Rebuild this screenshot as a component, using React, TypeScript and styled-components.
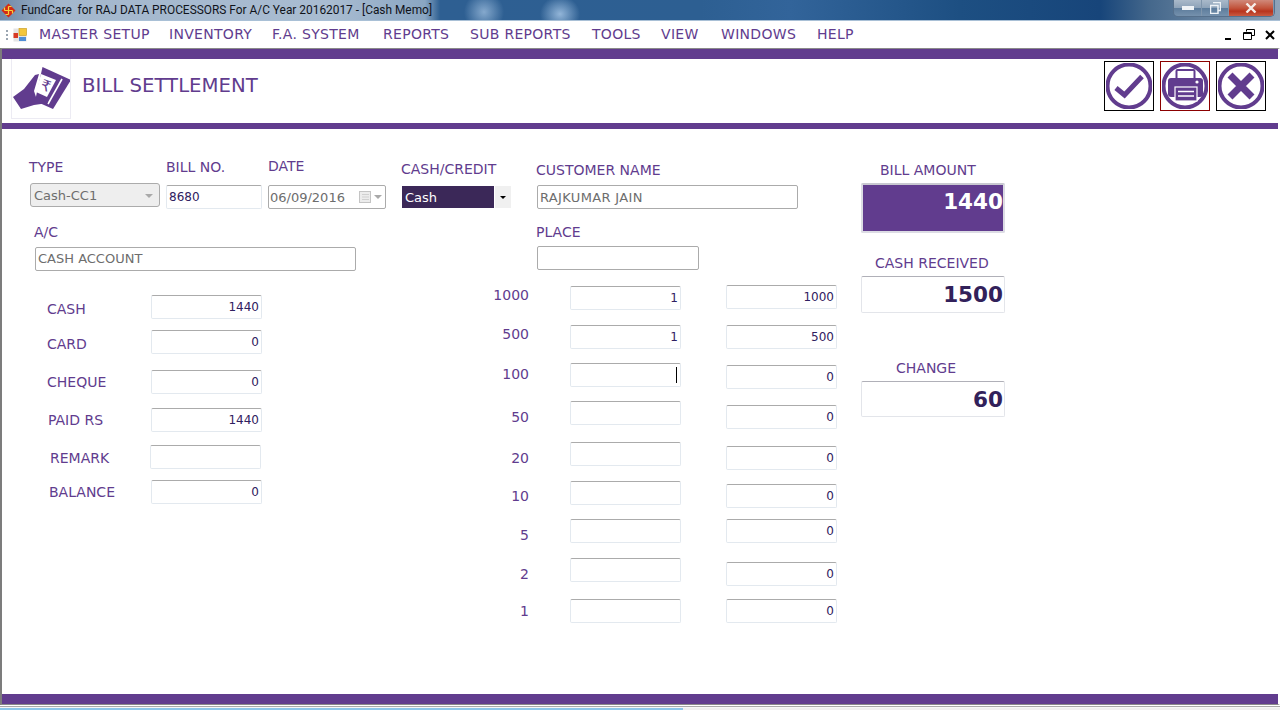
import React from 'react'
import styled, { createGlobalStyle } from 'styled-components'

const PURPLE = '#613c8e'
const INK = '#2f2060'

const GlobalStyle = createGlobalStyle`
  html, body {
    margin: 0;
    padding: 0;
    background: #fff;
    overflow: hidden;
  }
  * {
    box-sizing: border-box;
  }
`

const Window = styled.div`
  width: 1280px;
  height: 710px;
  display: flex;
  flex-direction: column;
  overflow: hidden;
  font-family: 'DejaVu Sans', Verdana, sans-serif;
  background: #fff;
`

const TitleBar = styled.div`
  height: 21px;
  display: flex;
  align-items: flex-start;
  border-bottom: 1px solid #a9c0d6;
  background:
    radial-gradient(ellipse 20px 20px at 484px 12px, rgba(170, 200, 230, 0.7), transparent),
    radial-gradient(ellipse 20px 18px at 560px 14px, rgba(180, 210, 240, 0.75), transparent),
    linear-gradient(90deg, #6f89a8 0, #a3b7cd 60px, #a9bcd1 330px, #8aa6c2 425px, #2e5f92 440px, #2d5f92 700px, #32649a 790px, #1d4f82 960px, #17457a 1100px, #45688c 1150px, #8fa3b8 1280px);
`

const TitleIcon = styled.svg`
  width: 15px;
  height: 15px;
  margin: 3px 0 0 1px;
  flex-shrink: 0;
`

const TitleText = styled.div`
  margin: 2px 0 0 5px;
  font: 11.9px/16px Roboto, 'Open Sans', sans-serif;
  color: #10131a;
  white-space: pre;
  flex: 1;
`

const WindowControls = styled.div`
  display: flex;
  width: 102px;
  height: 17px;
  margin-right: 5px;
  border: 1px solid #56708c;
  border-top: 0;
  border-radius: 0 0 5px 5px;
  overflow: hidden;
`

const ControlButton = styled.div<{ $w: number; $danger?: boolean }>`
  width: ${({ $w }) => $w}px;
  display: flex;
  align-items: center;
  justify-content: center;
  border-right: 1px solid #7f95ac;
  background: ${({ $danger }) =>
    $danger
      ? 'linear-gradient(180deg, #d0897a 0, #c2543c 50%, #b8341e 70%, #c95a42 100%)'
      : 'linear-gradient(180deg, #a9b9ca 0, #8ea3b9 48%, #5d7c9c 52%, #7591ad 100%)'};
`

const MenuBar = styled.div`
  height: 27px;
  display: flex;
  align-items: center;
  background: #fff;
`

const Grip = styled.div`
  width: 2px;
  height: 10px;
  margin: 0 5px 0 6px;
  background: repeating-linear-gradient(180deg, #9aa5b1 0 2px, transparent 2px 4px);
`

const MenuIcon = styled.svg`
  width: 14px;
  height: 14px;
  margin-right: 12px;
`

const MenuItem = styled.div<{ $w: number }>`
  width: ${({ $w }) => $w}px;
  font-size: 14px;
  line-height: 27px;
  color: ${PURPLE};
  letter-spacing: 0.3px;
  white-space: nowrap;
`

const MdiControls = styled.div`
  margin-left: auto;
  display: flex;
  align-items: center;
  gap: 9px;
  margin-right: 4px;
`

const Frame = styled.div`
  height: 657px;
  display: flex;
  flex-direction: column;
  border-top: 1px solid #8a8a8a;
  border-left: 2px solid #7c7c7c;
  border-bottom: 1px solid #8a8a8a;
  border-right: 2px solid #fff;
`

const Band = styled.div<{ $h: number }>`
  height: ${({ $h }) => $h}px;
  background: ${PURPLE};
  flex-shrink: 0;
`

const HeaderRow = styled.div`
  height: 64px;
  display: flex;
  align-items: flex-start;
`

const LogoBox = styled.div`
  width: 60px;
  height: 60px;
  margin-left: 9px;
  border: 1px solid #ecebf3;
  border-top: 0;
`

const PageTitle = styled.div`
  margin: 16px 0 0 11px;
  font-size: 19.7px;
  line-height: 22px;
  color: ${PURPLE};
  flex: 1;
`

const ActionGroup = styled.div`
  display: flex;
  gap: 6px;
  margin: 2px 12px 0 0;
`

const ActionButton = styled.div<{ $active?: boolean }>`
  width: 50px;
  height: 50px;
  border: 1.5px solid ${({ $active }) => ($active ? '#8b0000' : '#000')};
  display: flex;
  align-items: center;
  justify-content: center;
  background: #fff;
`

const Body = styled.div`
  flex: 1;
  display: flex;
  padding-left: 27px;
`

const LeftColumn = styled.div`
  width: 372px;
  padding-top: 29px;
`

const MiddleColumn = styled.div`
  width: 460px;
  padding-top: 31px;
`

const RightColumn = styled.div`
  width: 144px;
  padding-top: 32px;
`

const Row = styled.div`
  display: flex;
  align-items: flex-start;
`

const Field = styled.div<{ $w?: number; $mt?: number; $ml?: number }>`
  display: flex;
  flex-direction: column;
  align-items: flex-start;
  ${({ $w }) => ($w ? `width: ${$w}px;` : '')}
  margin-top: ${({ $mt = 0 }) => $mt}px;
  margin-left: ${({ $ml = 0 }) => $ml}px;
`

const Label = styled.div<{ $mb?: number }>`
  height: 18px;
  font-size: 14px;
  line-height: 19px;
  color: ${PURPLE};
  white-space: nowrap;
  margin-bottom: ${({ $mb = 0 }) => $mb}px;
`

const TextBox = styled.div<{ $w: number; $ml?: number; $outlined?: boolean; $right?: boolean }>`
  width: ${({ $w }) => $w}px;
  height: 24px;
  flex-shrink: 0;
  margin-left: ${({ $ml = 0 }) => $ml}px;
  padding: 0 2px;
  display: flex;
  align-items: center;
  justify-content: ${({ $right }) => ($right ? 'flex-end' : 'flex-start')};
  border: 1px solid ${({ $outlined }) => ($outlined ? '#ababab' : '#e3e9ef')};
  border-top-color: #ababab;
  border-radius: 2px;
  background: #fff;
  font-size: ${({ $outlined }) => ($outlined ? 13 : 12)}px;
  color: ${({ $outlined }) => ($outlined ? '#6d6d6d' : INK)};
  white-space: nowrap;
`

const CustomerBox = styled(TextBox)`
  letter-spacing: 0.35px;
`

const AccountBox = styled(TextBox)`
  padding-bottom: 2px;
`

const Caret = styled.span`
  width: 1px;
  height: 16px;
  margin-right: 1px;
  background: #000;
`

const GreySelect = styled.div`
  width: 130px;
  height: 24px;
  margin-left: 1px;
  padding: 1px 6px 0 3px;
  display: flex;
  align-items: center;
  justify-content: space-between;
  border: 1px solid #ababab;
  border-radius: 3px;
  background: #eeeeee;
  font-size: 13px;
  color: #6d6d6d;
`

const DownArrow = styled.span<{ $color?: string; $size?: number }>`
  width: 0;
  height: 0;
  border-left: ${({ $size = 4 }) => $size}px solid transparent;
  border-right: ${({ $size = 4 }) => $size}px solid transparent;
  border-top: ${({ $size = 4 }) => $size}px solid ${({ $color = '#a9a9a9' }) => $color};
`

const DateBox = styled(TextBox)`
  padding: 0 3px 0 1px;
  justify-content: space-between;
`

const CalendarGroup = styled.span`
  display: flex;
  align-items: center;
  gap: 2px;
`

const CalendarIcon = styled.svg`
  width: 13px;
  height: 13px;
`

const DarkSelect = styled.div`
  display: flex;
  gap: 1px;
  height: 22px;
  margin-left: 1px;
`

const DarkSelectValue = styled.div`
  width: 92px;
  padding-left: 3px;
  background: #3b2858;
  color: #fff;
  font-size: 13px;
  line-height: 23px;
`

const DarkSelectButton = styled.div`
  width: 16px;
  background: #f0f0f0;
  display: flex;
  align-items: center;
  justify-content: center;
`

const PayList = styled.div`
  margin-top: 24px;
  width: 233px;
`

const PayRowBox = styled.div<{ $h: number }>`
  height: ${({ $h }) => $h}px;
  display: flex;
  align-items: flex-start;
`

const PayLabel = styled(Label)<{ $left: number; $dy: number }>`
  margin-left: ${({ $left }) => $left}px;
  margin-top: ${({ $dy }) => $dy}px;
`

const PayBox = styled(TextBox)<{ $shift?: number }>`
  margin-left: auto;
  margin-right: ${({ $shift = 0 }) => $shift}px;
`

const DenomList = styled.div`
  margin-top: 15px;
`

const DenomRowBox = styled.div<{ $h: number }>`
  height: ${({ $h }) => $h}px;
  display: flex;
  align-items: flex-start;
`

const DenomLabel = styled(Label)<{ $dy: number }>`
  width: 128px;
  text-align: right;
  margin-top: ${({ $dy }) => $dy}px;
`

const DenomBox = styled(TextBox)<{ $dy: number }>`
  margin-top: ${({ $dy }) => $dy}px;
`

const SummaryLabel = styled(Label)<{ $left: number; $mt?: number }>`
  margin-left: ${({ $left }) => $left}px;
  margin-top: ${({ $mt = 0 }) => $mt}px;
  margin-bottom: 4px;
`

const SummaryBox = styled.div<{ $h: number; $filled?: boolean }>`
  width: 144px;
  height: ${({ $h }) => $h}px;
  padding: ${({ $filled }) => ($filled ? '1px 0 0 0' : '0 1px 0 0')};
  display: flex;
  align-items: ${({ $filled }) => ($filled ? 'flex-start' : 'center')};
  justify-content: flex-end;
  border: ${({ $filled }) => ($filled ? '2px solid #dcdce4' : '1px solid #e3e5ea')};
  border-top-color: ${({ $filled }) => ($filled ? '#c8c8d0' : '#b0b0b8')};
  border-radius: 2px;
  background: ${({ $filled }) => ($filled ? PURPLE : '#fff')};
  color: ${({ $filled }) => ($filled ? '#fff' : '#32215a')};
  font-size: 21.5px;
  font-weight: 700;
  line-height: 31px;
`

const FooterStrip = styled.div`
  height: 5px;
  background: linear-gradient(180deg, #fff 0 1px, #a8a8a8 1px 2px, #f6f6f6 2px 3.4px, transparent 3.4px);
  display: flex;
  align-items: flex-end;
`

const FooterProgress = styled.div`
  width: 683px;
  height: 2px;
  background: #8cc6ea;
`

const FooterRest = styled.div`
  flex: 1;
  height: 2px;
  background: #efefef;
`

const menuItems: [string, number][] = [
  ['MASTER SETUP', 130],
  ['INVENTORY', 103],
  ['F.A. SYSTEM', 111],
  ['REPORTS', 87],
  ['SUB REPORTS', 122],
  ['TOOLS', 69],
  ['VIEW', 60],
  ['WINDOWS', 96],
  ['HELP', 50],
]

const payRows = [
  { label: 'CASH', left: 18, dy: 5, h: 35, value: '1440' },
  { label: 'CARD', left: 18, dy: 5, h: 40, value: '0' },
  { label: 'CHEQUE', left: 18, dy: 3, h: 38, value: '0' },
  { label: 'PAID RS', left: 19, dy: 3, h: 37, value: '1440' },
  { label: 'REMARK', left: 21, dy: 4, h: 35, value: '', shift: 1 },
  { label: 'BALANCE', left: 20, dy: 3, h: 24, value: '0' },
]

const denomRows = [
  { label: '1000', h: 40, ly: 1, ay: 1, by: 0, qty: '1', amount: '1000' },
  { label: '500', h: 38, ly: 0, ay: 0, by: 0, qty: '1', amount: '500' },
  { label: '100', h: 38, ly: 2, ay: 0, by: 2, qty: '', amount: '0', caret: true },
  { label: '50', h: 41, ly: 7, ay: 0, by: 4, qty: '', amount: '0' },
  { label: '20', h: 39, ly: 7, ay: 0, by: 4, qty: '', amount: '0' },
  { label: '10', h: 38, ly: 6, ay: 0, by: 3, qty: '', amount: '0' },
  { label: '5', h: 39, ly: 7, ay: 0, by: 0, qty: '', amount: '0' },
  { label: '2', h: 41, ly: 7, ay: 0, by: 4, qty: '', amount: '0' },
  { label: '1', h: 24, ly: 3, ay: 0, by: 0, qty: '', amount: '0' },
]

function BillLogo() {
  return (
    <svg width="58" height="58" viewBox="0 0 58 58">
      <path d="M30.5 8 L59 21 L41 50 L23 42 Z" fill={PURPLE} />
      <path d="M50 20 L36 45" stroke="#fff" strokeWidth="1.6" />
      <path d="M29 15 L44 21 L35 38 L24 33 Z" fill="#fff" />
      <text x="29" y="32" fontSize="15" fontFamily="'DejaVu Sans', sans-serif" fill={PURPLE} transform="rotate(20 34 27)">₹</text>
      <path d="M1 38 L12 30 L23 16 L27 15 L22 32 L24 38 L33 40 L36 44 L22 46 L9 50 Z" fill={PURPLE} />
    </svg>
  )
}

function CheckIcon() {
  return (
    <svg width="46" height="46" viewBox="2 2 46 46">
      <circle cx="25" cy="25" r="21.5" fill="none" stroke={PURPLE} strokeWidth="4" />
      <path d="M12 27 L20.5 34 L38 15.5" fill="none" stroke={PURPLE} strokeWidth="5" />
    </svg>
  )
}

function PrinterIcon() {
  return (
    <svg width="46" height="46" viewBox="2 2 46 46">
      <circle cx="25" cy="25" r="21.5" fill="none" stroke={PURPLE} strokeWidth="4" />
      <rect x="16.5" y="9" width="18" height="10" rx="1" fill="none" stroke={PURPLE} strokeWidth="2" />
      <path d="M11 17 H40 Q43 17 43 20 V33 Q43 36 40 36 H11 Q8 36 8 33 V20 Q8 17 11 17 Z" fill={PURPLE} />
      <circle cx="37" cy="21" r="1.6" fill="#fff" />
      <rect x="15" y="26" width="22" height="14" fill={PURPLE} stroke="#fff" strokeWidth="1.2" />
      <path d="M18 30.5 H34 M18 35 H34" stroke="#fff" strokeWidth="1.5" />
    </svg>
  )
}

function CloseIcon() {
  return (
    <svg width="46" height="46" viewBox="2 2 46 46">
      <circle cx="25" cy="25" r="21.5" fill="none" stroke={PURPLE} strokeWidth="4" />
      <path d="M14 14 L36 36 M36 14 L14 36" fill="none" stroke={PURPLE} strokeWidth="7" />
    </svg>
  )
}

export default function App() {
  return (
    <Window>
      <GlobalStyle />
      <TitleBar>
        <TitleIcon viewBox="0 0 15 15">
          <path d="M7.5 0.5 L14.5 7.5 L7.5 14.5 L0.5 7.5 Z" fill="#d42a12" />
          <path d="M7.5 3.5 V11.5 M3.5 7.5 H11.5 M7.5 3.5 H10.5 M11.5 7.5 V10.5 M7.5 11.5 H4.5 M3.5 7.5 V4.5" stroke="#f7d23a" strokeWidth="1.2" fill="none" />
        </TitleIcon>
        <TitleText>FundCare  for RAJ DATA PROCESSORS For A/C Year 20162017 - [Cash Memo]</TitleText>
        <WindowControls>
          <ControlButton $w={28}>
            <svg width="12" height="4"><rect width="12" height="4" fill="#eef2f6" /></svg>
          </ControlButton>
          <ControlButton $w={27}>
            <svg width="11" height="12" viewBox="0 0 11 12">
              <path d="M3 0.5 H10.5 V8.5 H8 M0.5 3.5 H8 V11.5 H0.5 Z" fill="none" stroke="#eef2f6" strokeWidth="1.5" />
            </svg>
          </ControlButton>
          <ControlButton $w={45} $danger>
            <svg width="12" height="10" viewBox="0 0 12 10">
              <path d="M1.5 0.5 L10.5 9.5 M10.5 0.5 L1.5 9.5" stroke="#f6eeea" strokeWidth="2.4" />
            </svg>
          </ControlButton>
        </WindowControls>
      </TitleBar>

      <MenuBar>
        <Grip />
        <MenuIcon viewBox="0 0 14 14">
          <rect x="0.5" y="0.5" width="13" height="13" fill="#e4e4e4" />
          <rect x="6" y="0.5" width="7.5" height="7" fill="#f3c63c" stroke="#c99a1a" strokeWidth="0.6" />
          <rect x="0.5" y="5" width="4.5" height="5" fill="#d83a26" />
          <rect x="6" y="9" width="7" height="4" fill="#4f8ed6" />
        </MenuIcon>
        {menuItems.map(([name, width]) => (
          <MenuItem key={name} $w={width}>{name}</MenuItem>
        ))}
        <MdiControls>
          <svg width="12" height="12" viewBox="0 0 12 12"><rect x="3" y="9" width="6" height="2" fill="#000" /></svg>
          <svg width="12" height="12" viewBox="0 0 12 12">
            <path d="M3.5 2.5 V0.5 H11.5 V6.5 H9 M0.5 3.5 H8.5 V10.5 H0.5 Z M0.5 4.5 H8.5" fill="none" stroke="#000" />
          </svg>
          <svg width="12" height="12" viewBox="0 0 12 12">
            <path d="M2 2 L10 10 M10 2 L2 10" stroke="#000" strokeWidth="2" />
          </svg>
        </MdiControls>
      </MenuBar>

      <Frame>
        <Band $h={10} />
        <HeaderRow>
          <LogoBox><BillLogo /></LogoBox>
          <PageTitle>BILL SETTLEMENT</PageTitle>
          <ActionGroup>
            <ActionButton><CheckIcon /></ActionButton>
            <ActionButton $active><PrinterIcon /></ActionButton>
            <ActionButton><CloseIcon /></ActionButton>
          </ActionGroup>
        </HeaderRow>
        <Band $h={6} />

        <Body>
          <LeftColumn>
            <Row>
              <Field $w={137}>
                <Label $mb={7}>TYPE</Label>
                <GreySelect>Cash-CC1<DownArrow /></GreySelect>
              </Field>
              <Field $w={102}>
                <Label $mb={9}>BILL NO.</Label>
                <TextBox $w={96}>8680</TextBox>
              </Field>
              <Field $mt={-1}>
                <Label $mb={10}>DATE</Label>
                <DateBox $w={118} $outlined>
                  06/09/2016
                  <CalendarGroup>
                    <CalendarIcon viewBox="0 0 13 13">
                      <rect x="0.5" y="0.5" width="11" height="11" fill="#ececec" stroke="#c4c4c4" />
                      <path d="M3 3.5 H10 M3 6 H10 M3 8.5 H10" stroke="#d0d0d0" />
                    </CalendarIcon>
                    <DownArrow />
                  </CalendarGroup>
                </DateBox>
              </Field>
            </Row>
            <Field $mt={14} $ml={5}>
              <Label $mb={6}>A/C</Label>
              <AccountBox $w={321} $ml={1} $outlined>CASH ACCOUNT</AccountBox>
            </Field>
            <PayList>
              {payRows.map(row => (
                <PayRowBox key={row.label} $h={row.h}>
                  <PayLabel $left={row.left} $dy={row.dy}>{row.label}</PayLabel>
                  <PayBox $w={111} $right $shift={row.shift}>{row.value}</PayBox>
                </PayRowBox>
              ))}
            </PayList>
          </LeftColumn>

          <MiddleColumn>
            <Row>
              <Field $w={135}>
                <Label $mb={8}>CASH/CREDIT</Label>
                <DarkSelect>
                  <DarkSelectValue>Cash</DarkSelectValue>
                  <DarkSelectButton><DownArrow $color="#000" $size={3} /></DarkSelectButton>
                </DarkSelect>
              </Field>
              <Field>
                <Field $mt={1}>
                  <Label $mb={6}>CUSTOMER NAME</Label>
                  <CustomerBox $w={261} $ml={1} $outlined>RAJKUMAR JAIN</CustomerBox>
                </Field>
                <Field $mt={14}>
                  <Label $mb={5}>PLACE</Label>
                  <TextBox $w={162} $ml={1} $outlined />
                </Field>
              </Field>
            </Row>
            <DenomList>
              {denomRows.map(row => (
                <DenomRowBox key={row.label} $h={row.h}>
                  <DenomLabel $dy={row.ly}>{row.label}</DenomLabel>
                  <DenomBox $w={111} $ml={41} $dy={row.ay} $right>
                    {row.qty}
                    {row.caret && <Caret />}
                  </DenomBox>
                  <DenomBox $w={111} $ml={45} $dy={row.by} $right>{row.amount}</DenomBox>
                </DenomRowBox>
              ))}
            </DenomList>
          </MiddleColumn>

          <RightColumn>
            <SummaryLabel $left={19}>BILL AMOUNT</SummaryLabel>
            <SummaryBox $h={50} $filled>1440</SummaryBox>
            <SummaryLabel $left={14} $mt={21}>CASH RECEIVED</SummaryLabel>
            <SummaryBox $h={37}>1500</SummaryBox>
            <SummaryLabel $left={35} $mt={46}>CHANGE</SummaryLabel>
            <SummaryBox $h={36}>60</SummaryBox>
          </RightColumn>
        </Body>

        <Band $h={10} />
      </Frame>

      <FooterStrip>
        <FooterProgress />
        <FooterRest />
      </FooterStrip>
    </Window>
  )
}
